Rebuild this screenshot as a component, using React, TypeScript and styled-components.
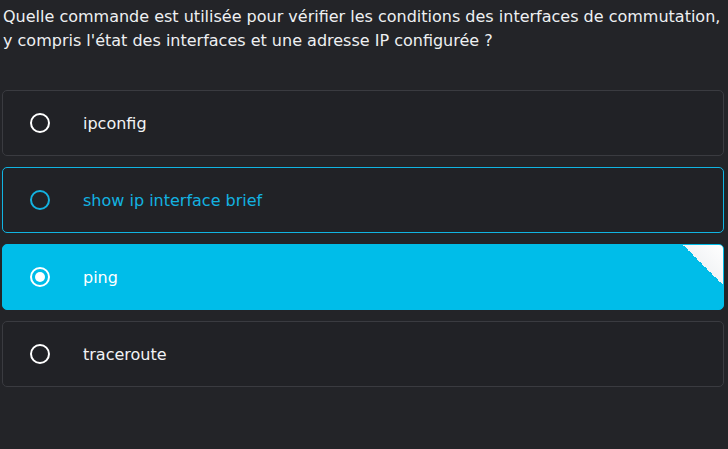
import React from "react";
import styled, { createGlobalStyle, css } from "styled-components";

const Global = createGlobalStyle`
  html, body { margin: 0; padding: 0; background: #232428; }
  body { font-family: "DejaVu Sans", "Liberation Sans", sans-serif; }
`;

const Page = styled.div`
  width: 728px;
  height: 449px;
  box-sizing: border-box;
  padding: 5px 4px 0 2px;
  background: #232428;
  color: #eceff1;
`;

const Question = styled.p`
  margin: 0 0 0 1px;
  font-size: 16px;
  line-height: 24px;
  color: #eef0f2;
`;

const List = styled.div`
  margin-top: 37px;
  display: flex;
  flex-direction: column;
  gap: 11px;
`;

type State = "idle" | "hover" | "selected";

const Option = styled.div<{ $state: State }>`
  position: relative;
  overflow: hidden;
  height: 66px;
  box-sizing: border-box;
  border-radius: 5px;
  border: 1px solid #3a3b40;
  background: #212226;
  display: flex;
  align-items: center;
  padding-left: 27px;
  gap: 33px;
  font-size: 16px;
  color: #f2f3f5;
  ${(p) =>
    p.$state === "hover" &&
    css`
      border-color: #11b4e2;
      color: #13b2e0;
    `}
  ${(p) =>
    p.$state === "selected" &&
    css`
      border-color: #00bde9;
      background: #00bde9;
      color: #ffffff;
    `}
`;

const Radio = styled.span<{ $state: State }>`
  width: 20px;
  height: 20px;
  box-sizing: border-box;
  border-radius: 50%;
  border: 2px solid ${(p) => (p.$state === "hover" ? "#13b2e0" : "#ffffff")};
  display: flex;
  align-items: center;
  justify-content: center;
  flex: none;
  &::after {
    content: "";
    display: ${(p) => (p.$state === "selected" ? "block" : "none")};
    width: 10px;
    height: 10px;
    border-radius: 50%;
    background: #ffffff;
  }
`;

const Fold = styled.span`
  position: absolute;
  top: 0;
  right: 0;
  width: 40px;
  height: 40px;
  background: linear-gradient(225deg, #ffffff 0%, #f2f4f6 50%, transparent 50%);
`;

const options: { label: string; state: State }[] = [
  { label: "ipconfig", state: "idle" },
  { label: "show ip interface brief", state: "hover" },
  { label: "ping", state: "selected" },
  { label: "traceroute", state: "idle" },
];

export default function App() {
  return (
    <>
      <Global />
      <Page>
        <Question>
          Quelle commande est utilisée pour vérifier les conditions des interfaces de commutation,
          y compris l'état des interfaces et une adresse IP configurée ?
        </Question>
        <List>
          {options.map((o) => (
            <Option key={o.label} $state={o.state}>
              <Radio $state={o.state} />
              <span>{o.label}</span>
              {o.state === "selected" && <Fold />}
            </Option>
          ))}
        </List>
      </Page>
    </>
  );
}
